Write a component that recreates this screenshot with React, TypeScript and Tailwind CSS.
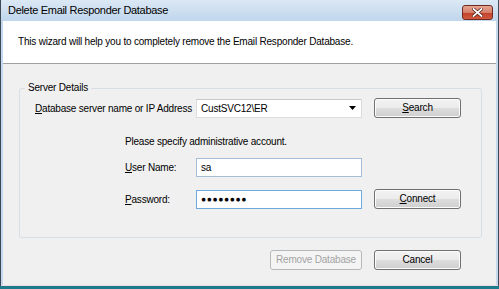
const font = { fontFamily: '"Liberation Sans", Arial, sans-serif' };

function Button({ label, ul, disabled, className = 'w-[87px]' }: { label: string; ul?: number; disabled?: boolean; className?: string }) {
  const text =
    ul === undefined ? label : (
      <>
        {label.slice(0, ul)}
        <span className="underline underline-offset-[1px]">{label[ul]}</span>
        {label.slice(ul + 1)}
      </>
    );
  return (
    <button
      className={`${className} h-[20px] shrink-0 rounded-[3px] border text-[10px] tracking-[-0.2px] leading-none whitespace-nowrap ${
        disabled
          ? 'border-[#b5b8ba] bg-[#f4f4f4] text-[#a3a3a3]'
          : 'border-[#707070] bg-[linear-gradient(#f3f3f3_0%,#ebebeb_50%,#dddddd_51%,#cfcfcf_100%)] text-black shadow-[inset_0_0_0_1px_#fcfcfc]'
      }`}
    >
      {text}
    </button>
  );
}

function Field({ value, focused, password }: { value: string; focused?: boolean; password?: boolean }) {
  return (
    <div
      className={`w-[166px] h-[19px] bg-white border flex items-center px-[4px] text-[10px] ${
        focused ? 'border-[#6fa8dc]' : 'border-[#a5bdd6]'
      }`}
    >
      {password ? <span className="text-[8.5px] tracking-[0.6px]">●●●●●●●●</span> : value}
    </div>
  );
}

export default function App() {
  return (
    <div className="w-[499px] h-[289px] flex flex-col bg-[#c5d9ee] border-l border-r border-[#3d4a55] text-black tracking-[-0.2px]" style={font}>
      {/* title bar */}
      <div className="h-[21px] flex items-center justify-between pl-[7px] pr-[5px] bg-[linear-gradient(#dbe8f5,#c0d6ec)]">
        <span className="text-[11px] tracking-[-0.3px] text-black">Delete Email Responder Database</span>
        <div className="w-[31px] h-[15px] mt-[4px] rounded-[3px] border border-[#6e2a20] bg-[linear-gradient(#e8a493_0%,#d4806b_50%,#c2432c_55%,#d0593f_100%)] flex items-center justify-center">
          <svg width="11" height="9" viewBox="0 0 11 9">
            <path d="M1.5 1 L9.5 8 M9.5 1 L1.5 8" stroke="#4a1a10" strokeWidth="3.2" strokeLinecap="square" />
            <path d="M1.5 1 L9.5 8 M9.5 1 L1.5 8" stroke="#ffffff" strokeWidth="1.8" strokeLinecap="square" />
          </svg>
        </div>
      </div>

      <div className="flex-1 mx-[2px] flex flex-col bg-[#f0f0f0]">
        {/* header */}
        <div className="h-[43px] bg-white border-b border-[#a0a0a0] flex items-center pl-[15px] pb-[2px] text-[10px]">
          This wizard will help you to completely remove the Email Responder Database.
        </div>

        {/* server details group */}
        <div className="relative mt-[24px] ml-[16px] w-[463px] h-[150px] border border-[#d5dfe5] rounded-[3px] pl-[15px] pt-[9px]">
          <span className="absolute -top-[7px] left-[5px] px-[3px] bg-[#f0f0f0] text-[10px] leading-[12px]">Server Details</span>
          <div className="flex items-center h-[20px]">
            <span className="w-[161px] text-[10px] whitespace-nowrap">
              <span className="underline underline-offset-[1px]">D</span>atabase server name or IP Address
            </span>
            <div className="w-[166px] h-[19px] bg-white border border-[#dcdcdc] border-t-[#c8c8c8] flex items-center justify-between pl-[4px] pr-[5px] text-[10px]">
              CustSVC12\ER
              <svg width="7" height="4" viewBox="0 0 7 4">
                <path d="M0 0 H7 L3.5 4 Z" fill="#000" />
              </svg>
            </div>
            <Button label="Search" ul={0} className="w-[87px] ml-[12px]" />
          </div>
          <div className="ml-[90px] mt-[18px] text-[10px] leading-[12px]">Please specify administrative account.</div>
          <div className="flex items-center h-[19px] mt-[10px] ml-[90px]">
            <span className="w-[71px] text-[10px]">
              <span className="underline underline-offset-[1px]">U</span>ser Name:
            </span>
            <Field value="sa" />
          </div>
          <div className="flex items-center h-[20px] mt-[12px] ml-[90px]">
            <span className="w-[71px] text-[10px]">
              <span className="underline underline-offset-[1px]">P</span>assword:
            </span>
            <Field value="" password focused />
            <Button label="Connect" ul={0} className="w-[87px] ml-[12px]" />
          </div>
        </div>

        {/* footer */}
        <div className="flex justify-end gap-[12px] mt-[12px] pr-[35px]">
          <Button label="Remove Database" disabled className="w-[92px]" />
          <Button label="Cancel" />
        </div>
      </div>
      <div className="h-[1px] bg-[#f0d8e4]" />
      <div className="h-[3px] bg-[#1b7d8c] -mx-[1px]" />
    </div>
  );
}
